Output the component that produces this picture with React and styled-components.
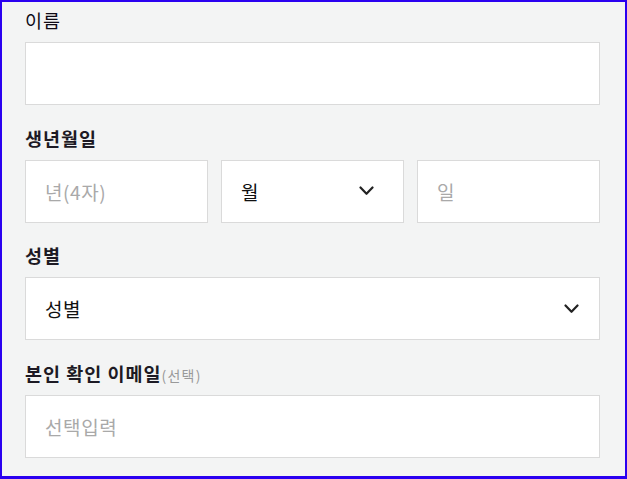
import React from 'react';
import styled, { createGlobalStyle } from 'styled-components';

const GlobalStyle = createGlobalStyle`
  html, body {
    margin: 0;
    padding: 0;
    background: #2a00f0;
  }
  * {
    box-sizing: border-box;
  }
`;

const Frame = styled.div`
  width: 627px;
  height: 479px;
  border: 2px solid #2a00f0;
  border-bottom-width: 3px;
  background: #f3f4f4;
  padding: 6px 25px 0 23px;
  font-family: "Noto Sans CJK KR", "Noto Sans", sans-serif;
  overflow: hidden;
`;

const Field = styled.div`
  margin-bottom: 20.5px;
`;

const Label = styled.div`
  font-size: 18.5px;
  line-height: 24px;
  height: 24px;
  letter-spacing: 1px;
  font-weight: ${p => (p.$light ? 400 : 700)};
  color: ${p => (p.$light ? '#0e0a16' : '#1d1a24')};
  margin-bottom: 10px;
  white-space: nowrap;
`;

const Optional = styled.span`
  font-size: 14px;
  font-weight: 400;
  color: #999;
  letter-spacing: 1.2px;
`;

const Row = styled.div`
  display: grid;
  grid-template-columns: repeat(3, 1fr);
  gap: 13px;
`;

const Box = styled.div`
  height: 63px;
  background: #fff;
  border: 1px solid #dadada;
  display: flex;
  align-items: center;
  justify-content: space-between;
  padding: 0 ${p => p.$right || 20}px 0 19px;
  font-size: 19px;
  letter-spacing: 0.6px;
  color: ${p => (p.$placeholder ? '#a9a9a9' : '#111')};
`;

const Chevron = ({ size = 15 }) => (
  <svg width={size} height="10" viewBox="0 0 15 10" fill="none">
    <path d="M1.5 1.5 L7.5 7.8 L13.5 1.5" stroke="#222" strokeWidth="2.2" strokeLinecap="round" strokeLinejoin="round" />
  </svg>
);

export default function App() {
  return (
    <>
      <GlobalStyle />
      <Frame>
        <Field>
          <Label $light>이름</Label>
          <Box />
        </Field>
        <Field>
          <Label>생년월일</Label>
          <Row>
            <Box $placeholder>년(4자)</Box>
            <Box $right={29}>
              월
              <Chevron />
            </Box>
            <Box $placeholder>일</Box>
          </Row>
        </Field>
        <Field>
          <Label>성별</Label>
          <Box $right={20}>
            성별
            <Chevron />
          </Box>
        </Field>
        <Field>
          <Label>
            본인 확인 이메일<Optional>(선택)</Optional>
          </Label>
          <Box $placeholder>선택입력</Box>
        </Field>
      </Frame>
    </>
  );
}
